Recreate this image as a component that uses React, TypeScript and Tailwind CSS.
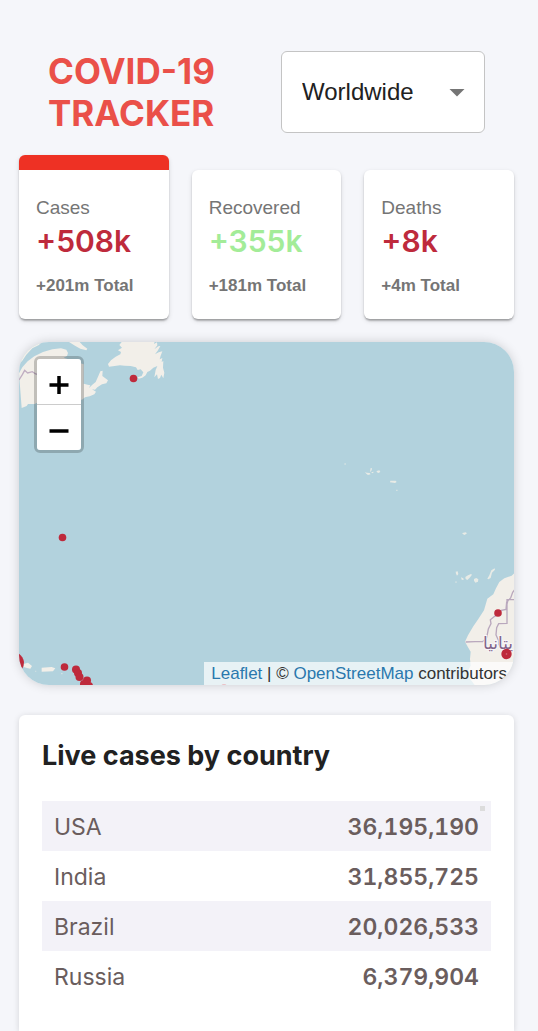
import React from "react";

const stats = [
  { title: "Cases", daily: "+508k", total: "+201m Total", color: "text-[#be2a3c]", active: true },
  { title: "Recovered", daily: "+355k", total: "+181m Total", color: "text-[#a3ec98]", active: false },
  { title: "Deaths", daily: "+8k", total: "+4m Total", color: "text-[#be2a3c]", active: false },
];

const countries = [
  { name: "USA", cases: 36195190 },
  { name: "India", cases: 31855725 },
  { name: "Brazil", cases: 20026533 },
  { name: "Russia", cases: 6379904 },
];

function Header() {
  return (
    <header className="flex items-center justify-between px-[29px]">
      <h1 className="w-[190px] font-['Inter',sans-serif] text-[35px] leading-[42px] font-bold text-[#ea5049]">
        COVID-19 TRACKER
      </h1>
      <div className="relative w-[204px]">
        <select
          aria-label="Region"
          className="block h-[82px] w-full appearance-none rounded-md border border-[#c4c4c4] bg-white pr-12 pl-5 font-['Liberation_Sans',sans-serif] text-[24px] text-[#212121]"
        >
          <option>Worldwide</option>
          {countries.map((c) => (
            <option key={c.name}>{c.name}</option>
          ))}
        </select>
        <svg
          className="pointer-events-none absolute top-[38px] right-5 h-2 w-4"
          viewBox="0 0 16 8"
          aria-hidden="true"
        >
          <path d="M.5 0h15L8 7.5z" fill="#757575" />
        </svg>
      </div>
    </header>
  );
}

function StatCard({ stat }: { stat: (typeof stats)[number] }) {
  return (
    <button
      type="button"
      className={
        "flex flex-col items-start rounded-md bg-white px-[17px] pt-[26px] pb-[23px] text-left font-['Liberation_Sans',sans-serif] shadow-[0_3px_2px_-1px_rgba(0,0,0,0.2),0_1px_2px_rgba(0,0,0,0.14),0_2px_5px_rgba(0,0,0,0.12)] " +
        (stat.active ? "border-t-[15px] border-[#ee3124]" : "mt-[15px]")
      }
    >
      <span className="text-[19px] leading-6 text-[#757575]">{stat.title}</span>
      <span className={"font-['Inter',sans-serif] text-[30px] leading-[42px] font-semibold " + stat.color}>
        {stat.daily}
      </span>
      <span className="mt-[14px] text-[17px] leading-5 font-bold text-[#757575]">{stat.total}</span>
    </button>
  );
}

function WorldMap() {
  return (
    <svg
      className="block h-full w-full"
      viewBox="0 0 495 343"
      preserveAspectRatio="xMidYMid slice"
      role="img"
      aria-label="Map of the Atlantic"
    >
      <rect width="495" height="343" fill="#b2d2dd" />
      {/* Eastern Canada */}
      <g transform="translate(-4 -4) scale(.33333)" fill="#f2efe9">
        <path d="M12 12h68l-8 9-20 10-18 19-12 18-10 10z" />
        <path d="M12 106l10-18 16-18 20-15 26-13 28-8 26-3 16 4 5 10-3 9-10 5 60 20v58l12 3 8 2-4 8 10-10 10-8 8-18 6-14 7-2-1 16 17 13-5 9-13 3-14 9-7 7-9-1 12 7-5 8-14 6-14 3-9 7-50-2-68 3-24 12-20 0-4 6-15 6z" />
        <path d="M162 12h32l9 10 14 10-3 5-18-5-16-9z" />
        <path d="M320 12h86l13-1-2 7 9-5 1 9-9 12 12-9 6-1-8 14-8 11 11-6 11-3-5 13-3 11 8-4-2 12 5-3-1 20 4 15-3 17-6-11-4 10-6 3-3-14-8 9 4-22 5-12-12 5-10 9-8 4-5 10-10 7-11 3-3-4 12-4 5-11-8-9-9 2-5-8-16-4-18-1-14-1-16 2-17 2-3-8 9-11 14-11 14-7 2-7-9-5 12-8-8-8z" />
        <path
          d="M12 126l10-16 7-13 9 8 14-4 10 7 20 5"
          fill="none"
          stroke="#c0aec2"
          strokeWidth="4"
        />
      </g>
      {/* Azores, Madeira, Canaries */}
      <g transform="translate(311 98) scale(.33333)" fill="#e8ebe6">
        <path d="M105 96l5 2 9 1 3 4-8 2-5-4zM122 84l4 1-1 6-5 6zM123 97l8-2-2 5zM140 93l8-2 3 5-6 3-5-3zM181 122h16l3 4-5 3-15-2zM397 279l10-2 4 3-7 5-6-3z" />
        <path d="M43 70h5v4h-5zM198 149h5v4h-5zM376 424h4v5h-4z" opacity=".6" />
        <path d="M377 395l6-1 2 8-4 5-3-6zM393 412l7 3 1 5-6-1zM406 411l8-5 9-4 3 2-7 9-7 7-5-3zM432 417l7-3 6 4-1 7-8 3-4-6zM472 416l6-10 6-15 10-6 1 4-9 9-4 16-7 4z" />
      </g>
      {/* Northwest Africa */}
      <g transform="translate(421 218) scale(.33333)">
        <path
          d="M225 38l-10 9-22 8-15 11-10 19-8 18-18 13-10 35-17 26-15 22-16 27-9 19 9 17 8 13-2 22 2 20-7 13 5 26 14 19h121z"
          fill="#f2efe9"
        />
        <path
          d="M225 88l-7 9-6 17-12 12-2 22-14 3-8 12-12 6-13 10 2 12-8 16-5 26-12 12h-23l-28 1M225 119h-24v71l-25 1-6 12-2 22 8 17v14M204 120l-3 12"
          fill="none"
          stroke="#b9a8bd"
          strokeWidth="4"
        />
      </g>
      <text
        x="464"
        y="307"
        fontSize="17"
        fontFamily="'DejaVu Sans', sans-serif"
        fill="#806489"
        stroke="#f8f5f8"
        strokeWidth="2"
        paintOrder="stroke"
      >
        يتانيا
      </text>
      {/* Caribbean islands */}
      <g transform="translate(-9 178) scale(.33333)" fill="#f2efe9">
        <path d="M40 432l14-4 12 10-5 8-10-2-10-3zM95 443l30-2 11 4-7 9-34 1z" />
        <path d="M153 459h5v4h-5zM75 452h4v3h-4z" opacity=".5" />
      </g>
      <g fill="#be2a3c">
        <circle cx="114.500" cy="36.500" r="3.800" />
        <circle cx="43.500" cy="195.500" r="3.800" />
        <path d="M-1 311q5 3 6 9 0 4-2 7L-1 321z" />
        <circle cx="45.500" cy="325" r="3.800" />
        <circle cx="57" cy="327.500" r="4" />
        <circle cx="59" cy="331" r="4" />
        <circle cx="60.500" cy="335" r="4" />
        <circle cx="68" cy="338.500" r="4" />
        <circle cx="65" cy="342" r="4" />
        <circle cx="70" cy="344" r="4" />
        <circle cx="479" cy="271" r="3.800" />
        <circle cx="487.500" cy="312" r="5.200" />
        <circle cx="205" cy="345" r="3" />
      </g>
      <circle cx="487.500" cy="312" r=".8" fill="#d77482" />
    </svg>
  );
}

function MapPanel() {
  return (
    <section className="relative mt-[23px] h-[343px] overflow-hidden rounded-[30px] shadow-[0_0_12px_-1px_rgba(0,0,0,0.2)]">
      <WorldMap />
      <div className="absolute top-[14px] left-[15px] flex w-[50px] flex-col rounded-md border-[3px] border-black/20 bg-clip-padding">
        <button
          type="button"
          aria-label="Zoom in"
          className="flex h-[46px] items-center justify-center rounded-t-[3px] border-b border-[#ccc] bg-white pt-[7px]"
        >
          <svg className="h-5 w-5" viewBox="0 0 20 20" aria-hidden="true">
            <path d="M.5 10h19M10 1v18" stroke="#000" strokeWidth="3.500" />
          </svg>
        </button>
        <button
          type="button"
          aria-label="Zoom out"
          className="flex h-[45px] items-center justify-center rounded-b-[3px] bg-white pt-[6px]"
        >
          <svg className="h-5 w-5" viewBox="0 0 20 20" aria-hidden="true">
            <path d="M.5 10h19" stroke="#000" strokeWidth="3.500" />
          </svg>
        </button>
      </div>
      <div className="absolute right-0 bottom-0 bg-white/70 px-[7px] font-['Liberation_Sans',sans-serif] text-[17px] leading-[23px] whitespace-nowrap text-[#333]">
        <a href="#leaflet" className="text-[#2a78ad]">Leaflet</a> | ©{" "}
        <a href="#openstreetmap" className="text-[#2a78ad]">OpenStreetMap</a> contributors
      </div>
    </section>
  );
}

function CountryList() {
  return (
    <section className="mt-[30px] flex-1 rounded-t-md bg-white px-[23px] pt-[22px] pb-[30px] font-['Inter',sans-serif] shadow-[0_1px_6px_rgba(0,0,0,0.14)]">
      <h2 className="text-[27px] leading-[38px] font-bold text-[#212121]">Live cases by country</h2>
      <div className="relative mt-[26px]">
        <table className="w-full border-collapse text-[23px] leading-[30px] text-[#6a5d5d]">
          <tbody>
            {countries.map((c) => (
              <tr key={c.name} className="h-[50px] odd:bg-[#f3f2f8]">
                <td className="px-3 pt-[11px] pb-[9px]">{c.name}</td>
                <td className="px-3 pt-[11px] pb-[9px] text-right font-semibold tabular-nums">
                  {c.cases.toLocaleString("en-US")}
                </td>
              </tr>
            ))}
          </tbody>
        </table>
        <span className="absolute top-[5px] right-[6px] h-[5px] w-[5px] bg-[#dcdcdc]" />
      </div>
    </section>
  );
}

export default function App() {
  return (
    <main className="flex min-h-screen flex-col bg-[#f5f6fa] pt-[50px] pr-6 pl-[19px]">
      <Header />
      <div className="mt-[21px] grid grid-cols-3 gap-[23px]">
        {stats.map((s) => (
          <StatCard key={s.title} stat={s} />
        ))}
      </div>
      <MapPanel />
      <CountryList />
    </main>
  );
}
